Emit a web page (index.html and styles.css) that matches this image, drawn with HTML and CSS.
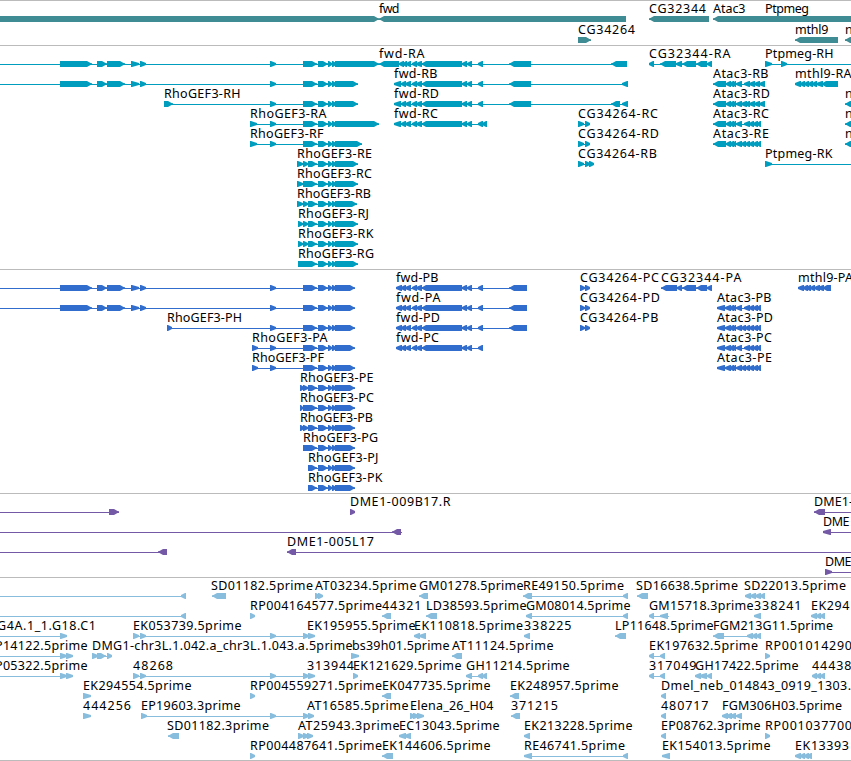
FILE: index.html
```html
<!DOCTYPE html>
<html lang="en">
<head>
<meta charset="utf-8">
<title>Genome browser</title>
<link rel="stylesheet" href="styles.css">
</head>
<body>
<main class="browser" id="browser"></main>
<script src="tracks.js"></script>
</body>
</html>
```
FILE: styles.css
```css
body {
  margin: 0;
  background: #fff;
}

.browser {
  width: 851px;
  height: 761px;
  overflow: hidden;
}

.track {
  box-sizing: border-box;
  display: flex;
  flex-direction: column;
  padding-top: 1px;
  border-top: 1px solid #bbb;
}

.track:last-child {
  border-bottom: 1px solid #bbb;
}

.row {
  display: block;
  flex: none;
  width: 851px;
  height: 20px;
  overflow: visible;
}

.genes { height: 45px; gap: 1px; color: #3f8c94; }
.transcripts { height: 224px; color: #009dbf; }
.proteins { height: 224px; color: #306dcc; }
.clones { height: 84px; color: #7459a6; }
.ests { height: 184px; color: #88bddd; }

.label {
  fill: #000;
  font-family: "Noto Sans", "DejaVu Sans", sans-serif;
  font-size: 12.5px;
}

.exon,
.intron {
  fill: currentColor;
}

.intron {
  shape-rendering: crispEdges;
}
```
FILE: tracks.js
```js
// Feature: [label, labelStart, labelEnd, direction, "start-end ..." exons, line start, line end]
const coding = end => `303-317 318-328 328-332 332-336 335-${end}`;
const upstream = '60-92 97-107 107-125 131-139 140-146 270-276 ';
const fwdCore = '401-406 405-411 412-417 416-422 421-462 462-467 467-472';
const est = (label, a, b, dir, exons, from, to) => [label, a, b, dir, exons, from, to];
const atacMid = '726-731 730-734 733-736 736-742';

const tracks = [
  ['genes', [
    [['', 0, 0, 'R', '-20-379'], ['fwd', 379, 399.5, 'L', '379-626'],
     ['CG32344', 649, 706, 'L', '649-709'], ['Atac3', 713, 745.5, 'L', '713-870'],
     ['Ptpmeg', 765, 809, 'L', '']],
    [['CG34264', 578, 635, 'R', '578-591'], ['mthl9', 795, 828.5, 'L', '795-838'],
     ['n', 845, 852, 'L', '845-860']]
  ]],
  ['transcripts', [
    [['', 0, 0, 'R', upstream + coding(379), 0],
     ['fwd-RA', 379, 424.5, 'L', '379-399 399-404 403-407 406-411 412-417 416-422 421-462 462-467 467-472 478-483 509-531 611-627'],
     ['CG32344-RA', 649, 730.5, 'L', '649-654 660-676 676-682 682-696 696-707 707-712'],
     ['Ptpmeg-RH', 765, 833.5, 'R', '765-772 781-787', 765, 851]],
    [['', 0, 0, 'R', upstream + coding(358), 0],
     ['fwd-RB', 394, 437.5, 'L', '394-401 ' + fwdCore + ' 478-483 509-531 622-628'],
     ['Atac3-RB', 713, 768.5, 'L', '713-726 ' + atacMid + ' 744-750 749-755 754-760 759-765'],
     ['mthl9-RA', 795, 851.5, 'L', '795-801 800-805 804-809 808-813 812-817 816-823 821-838']],
    [['RhoGEF3-RH', 164, 240.5, 'R', '164-173 270-276 ' + coding(358)],
     ['fwd-RD', 394, 439, 'L', '394-401 ' + fwdCore + ' 478-483 509-531 611-620 622-628'],
     ['Atac3-RD', 713, 770, 'L', '713-726 ' + atacMid + ' 741-747 745-750 749-755 754-760 759-765'],
     ['n', 845, 852, 'L', '845-860']],
    [['RhoGEF3-RA', 250, 326.5, 'R', '250-257 270-276 ' + coding(379)],
     ['fwd-RC', 394, 438, 'L', '394-401 ' + fwdCore + ' 478-483 482-487'],
     ['CG34264-RC', 578, 658, 'R', '578-584 585-590'],
     ['Atac3-RC', 713, 769, 'L', '713-726 ' + atacMid + ' 744-750 749-754 753-758 757-761'],
     ['n', 845, 852, 'L', '845-860']],
    [['RhoGEF3-RF', 250, 323.5, 'R', '250-257 270-276 ' + coding(362)],
     ['CG34264-RD', 578, 659, 'R', '578-584 585-590'],
     ['Atac3-RE', 713, 769, 'L', '713-726 ' + atacMid + ' 741-746 745-750 749-754 753-758 757-761'],
     ['n', 845, 852, 'L', '845-860']],
    [['RhoGEF3-RE', 297, 372, 'R', '297-303 303-308 308-317 ' + coding(358).slice(8)],
     ['CG34264-RB', 578, 657, 'R', '578-584 585-590 589-594'],
     ['Ptpmeg-RK', 765, 832.5, 'R', '765-772', 765, 851]],
    [['RhoGEF3-RC', 297, 372, 'R', '297-303 ' + coding(358)]],
    [['RhoGEF3-RB', 297, 371, 'R', '297-303 303-308 308-317 ' + coding(357).slice(8)]],
    [['RhoGEF3-RJ', 298, 369, 'R', '298-303 303-308 308-317 ' + coding(358).slice(8)]],
    [['RhoGEF3-RK', 298, 373.5, 'R', '298-303 303-308 308-317 ' + coding(358).slice(8)]],
    [['RhoGEF3-RG', 298, 374, 'R', '298-317 ' + coding(358).slice(8)]]
  ]],
  ['proteins', [
    [['', 0, 0, 'R', upstream + coding(355), 0],
     ['fwd-PB', 396, 438.5, 'L', '396-402 ' + fwdCore + ' 478-483 509-527'],
     ['CG34264-PC', 580, 659, 'R', '580-585 585-590'],
     ['CG32344-PA', 661, 741.5, 'L', '661-677 677-682 682-696 696-707 707-712'],
     ['mthl9-PA', 798, 853, 'L', '798-804 803-808 806-811 810-815 814-820 818-824 822-831']],
    [['', 0, 0, 'R', upstream + coding(355), 0],
     ['fwd-PA', 396, 440.5, 'L', '396-402 ' + fwdCore + ' 478-483 509-527'],
     ['CG34264-PD', 580, 660, 'R', '580-585 585-590'],
     ['Atac3-PB', 717, 771.5, 'L', '717-725 725-731 730-734 733-736 736-742 744-750 749-754 753-758 757-761']],
    [['RhoGEF3-PH', 167, 242, 'R', '167-172 270-276 ' + coding(355)],
     ['fwd-PD', 396, 440, 'L', '396-402 ' + fwdCore + ' 478-483 509-527'],
     ['CG34264-PB', 580, 658.5, 'R', '580-585 585-590'],
     ['Atac3-PD', 717, 773, 'L', '717-725 725-731 730-734 733-736 736-742 741-746 745-750 749-754 753-758 757-761']],
    [['RhoGEF3-PA', 252, 327.5, 'R', '252-258 270-276 ' + coding(355)],
     ['fwd-PC', 396, 439, 'L', '396-402 ' + fwdCore + ' 478-483'],
     ['Atac3-PC', 717, 772, 'L', '717-725 725-731 730-734 733-736 736-742 744-750 749-754 753-758 757-761']],
    [['RhoGEF3-PF', 252, 324, 'R', '252-258 270-276 ' + coding(355)],
     ['Atac3-PE', 717, 772, 'L', '717-725 725-731 730-734 733-736 736-742 741-746 745-750 749-754 753-758 757-761']],
    [['RhoGEF3-PE', 300, 373.5, 'R', '300-304 303-308 308-317 ' + coding(355).slice(8)]],
    [['RhoGEF3-PC', 300, 374, 'R', '300-303 ' + coding(355)]],
    [['RhoGEF3-PB', 300, 373, 'R', '300-304 303-308 308-317 ' + coding(355).slice(8)]],
    [['RhoGEF3-PG', 303, 378, 'R', coding(355)]],
    [['RhoGEF3-PJ', 308, 378.5, 'R', '308-317 ' + coding(355).slice(8)]],
    [['RhoGEF3-PK', 308, 382.5, 'R', '308-317 ' + coding(355).slice(8)]]
  ]],
  ['clones', [
    [['', 0, 0, 'R', '109-119', 0], ['DME1-009B17.R', 350, 450.5, 'R', '350-355'],
     ['DME1-', 814, 853, 'L', '814-825', 814, 851]],
    [['', 0, 0, 'L', '392-401', 0, 402], ['DME', 823, 849.5, 'L', '823-831', 823, 851]],
    [['', 0, 0, 'L', '158-167', 0], ['DME1-005L17', 287, 374, 'L', '287-296', 287, 851]],
    [['DME', 825, 851.5, 'R', '825-832', 825, 851]]
  ]],
  ['ests', [
    [est('', 0, 0, 'L', '181-186', 0), est('SD01182.5prime', 211, 313, 'L', '212-226'),
     est('AT03234.5prime', 315, 416.5, 'R', '315-320 318-323'), est('GM01278.5prime', 419, 523.5, 'L', '419-428'),
     est('RE49150.5prime', 523, 624, 'L', '523-532 623-628'), est('SD16638.5prime', 636, 738, 'L', '637-648'),
     est('SD22013.5prime', 744, 846, 'L', '745-751 750-756 755-761 760-765')],
    [est('', 0, 0, 'L', '181-186', 0), est('RP004164577.5prime', 250, 382, 'R', '250-255'),
     est('44321', 382, 421.5, 'L', '382-391'), est('LD38593.5prime', 426, 526.5, 'L', '426-437'),
     est('GM08014.5prime', 526, 630.5, 'L', '526-532 623-628'), est('GM15718.3prime', 649, 753.5, 'L', '649-654 660-668', 649, 669),
     est('338241', 754, 801.5, 'L', '754-761'), est('EK294', 811, 849.5, 'L', '811-817 816-821 820-825')],
    [est('G4A.1_1.G18.C1', -3, 96, 'R', '60-67', 0), est('EK053739.5prime', 133, 241.5, 'R', '133-139 140-146 270-276 303-309 308-315'),
     est('EK195955.5prime', 307, 415.5, 'R', ''), est('EK110818.5prime', 414, 523, 'L', '414-420 419-426'),
     est('338225', 524, 571.5, 'L', '524-530'), est('LP11648.5prime', 615, 713.5, 'L', '615-626'),
     est('FGM213G11.5prime', 713, 833, 'L', '713-724 747-753 752-757 756-761')],
    [est('P14122.5prime', -5, 87.5, 'R', '60-67 66-73', 0),
     est('DMG1-chr3L.1.042.a_chr3L.1.043.a.5prime', 92, 352.5, 'R', '92-98 97-106 107-112'),
     est('bs39h01.5prime', 352, 449.5, 'R', '351-359'), est('AT11124.5prime', 452, 553.5, 'L', '452-462'),
     est('EK197632.5prime', 649, 758, 'L', '649-654 660-665'), est('RP001014290', 765, 852, 'R', '765-770')],
    [est('P05322.5prime', -5, 87.5, 'R', '60-67 66-73', 0), est('48268', 133, 173, 'R', '133-139 140-146 270-276 303-309 308-315'),
     est('313944', 307, 354, 'R', ''), est('EK121629.5prime', 353, 461.5, 'R', '353-358'),
     est('GH11214.5prime', 466, 569.5, 'L', '466-472 478-483 482-487'), est('317049', 649, 696.5, 'L', '649-654 660-665'),
     est('GH17422.5prime', 695, 798.5, 'L', '695-701 699-707 707-712'), est('44438', 812, 851.5, 'L', '812-817 816-821 820-825')],
    [est('EK294554.5prime', 83, 191.5, 'R', '83-91'), est('RP004559271.5prime', 250, 382, 'R', '250-255'),
     est('EK047735.5prime', 382, 490.5, 'L', '382-391'), est('EK248957.5prime', 510, 618.5, 'L', '510-519'),
     est('Dmel_neb_014843_0919_1303.', 661, 851, 'L', '661-666')],
    [est('444256', 83, 131, 'R', '83-91'), est('EP19603.3prime', 141, 240.5, 'R', '141-147 270-276 303-309 308-314'),
     est('AT16585.5prime', 307, 408.5, 'R', ''), est('Elena_26_H04', 410, 493.5, 'R', '410-415 413-419 417-424'),
     est('371215', 511, 558, 'L', '511-520'), est('480717', 661, 708.5, 'L', '661-666'),
     est('FGM306H03.5prime', 722, 842, 'L', '722-728 726-732 730-736 736-742')],
    [est('SD01182.3prime', 167, 269, 'L', '168-179'), est('AT25943.3prime', 298, 399.5, 'R', '298-304 303-309 307-313'),
     est('EC13043.5prime', 399, 499.5, 'L', '399-406 404-411'), est('EK213228.5prime', 524, 632.5, 'L', '524-530'),
     est('EP08762.3prime', 661, 760.5, 'L', '661-666'), est('RP001037700', 765, 852, 'R', '765-770')],
    [est('RP004487641.5prime', 250, 382, 'R', '250-255'), est('EK144606.5prime', 382, 490.5, 'L', '382-393'),
     est('RE46741.5prime', 524, 625, 'L', '524-532 623-628'), est('EK154013.5prime', 662, 770.5, 'L', '662-670'),
     est('EK13393', 795, 849, 'L', '795-801 800-805 804-809 807-812')]
  ]]
];

const NS = 'http://www.w3.org/2000/svg';

function add(parent, tag, attrs) {
  const el = document.createElementNS(NS, tag);
  for (const key in attrs) el.setAttribute(key, attrs[key]);
  parent.appendChild(el);
  return el;
}

// Exon box, 6px tall, tapering to a point in the direction of the strand.
function exonPoints(start, end, dir) {
  const sign = dir === 'R' ? 1 : -1;
  const [tail, tip] = dir === 'R' ? [start, end] : [end, start];
  const length = end - start;
  const neck = length > 8 ? tip - 5 * sign : tail + sign;
  const shoulder = length > 8 ? tip - 1.5 * sign : tip;
  return `${tail},14 ${neck},14 ${shoulder},16 ${tip},16.3 ${tip},17.7 ${shoulder},18 ${neck},20 ${tail},20`;
}

for (const [name, rows] of tracks) {
  const section = document.createElement('section');
  section.className = 'track ' + name;
  for (const features of rows) {
    const svg = add(section, 'svg', { class: 'row', viewBox: '0 0 851 20' });
    for (const [label, a, b, dir, exons, from, to] of features) {
      const spans = (exons.match(/-?\d+-\d+/g) || []).map(s => s.match(/^(-?\d+)-(\d+)$/).slice(1).map(Number));
      if (spans.length) {
        const x = from ?? spans[0][0];
        const end = to ?? spans[spans.length - 1][1];
        add(svg, 'rect', { class: 'intron', x, y: 17, width: end - x, height: 1 });
        for (const [s, e] of spans) add(svg, 'polygon', { class: 'exon', points: exonPoints(s, e, dir) });
      }
      if (label) {
        const text = add(svg, 'text', { class: 'label', x: a, y: 11, textLength: b - a });
        text.textContent = label;
      }
    }
  }
  document.getElementById('browser').appendChild(section);
}
```
